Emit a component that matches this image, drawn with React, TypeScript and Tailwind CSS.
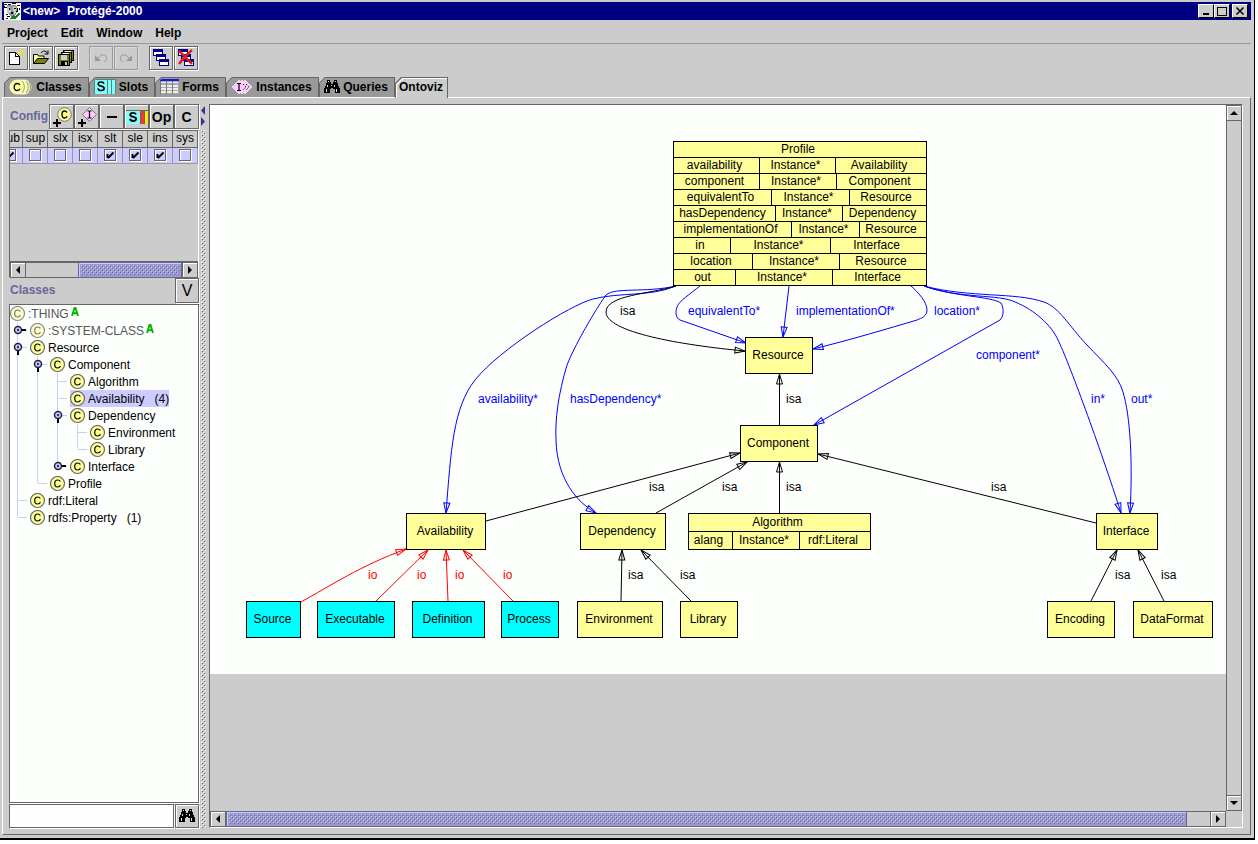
import React from "react";

type IconProps = { className?: string };

/* ---------- shared pieces ---------- */

const raised =
  "flex items-center justify-center border border-[#666] bg-[#ccc] shadow-[inset_1px_1px_0_#fff,1px_1px_0_#fff]";

function Bumps({ id, light, dark }: { id: string; light: string; dark: string }) {
  return (
    <svg className="block h-full w-full" shapeRendering="crispEdges" aria-hidden="true">
      <defs>
        <pattern id={id} width="4" height="4" patternUnits="userSpaceOnUse">
          <rect x="0" y="0" width="1" height="1" fill={light} />
          <rect x="2" y="2" width="1" height="1" fill={light} />
          <rect x="1" y="1" width="1" height="1" fill={dark} />
          <rect x="3" y="3" width="1" height="1" fill={dark} />
        </pattern>
      </defs>
      <rect width="100%" height="100%" fill={`url(#${id})`} />
    </svg>
  );
}

const arrowPaths = {
  left: "M6 0v8L2 4z",
  right: "M2 0v8l4-4z",
  up: "M0 6h8L4 2z",
  down: "M0 2h8L4 6z",
};

function ArrowButton({ dir }: { dir: keyof typeof arrowPaths }) {
  return (
    <button
      aria-label={`Scroll ${dir}`}
      className="flex size-4 shrink-0 items-center justify-center border border-[#666] bg-[#ccc] shadow-[inset_1px_1px_0_#fff]"
    >
      <svg width="8" height="8" aria-hidden="true">
        <path d={arrowPaths[dir]} />
      </svg>
    </button>
  );
}

function Thumb({ id, className }: { id: string; className: string }) {
  return (
    <div className={`h-4 border border-[#666699] bg-[#9999cc] p-0.5 shadow-[inset_1px_1px_0_#ccccff] ${className}`}>
      <Bumps id={id} light="#ccccff" dark="#666699" />
    </div>
  );
}

/* ---------- icons ---------- */

function AppIcon() {
  return (
    <svg width="17" height="17" viewBox="0 0 17 17" shapeRendering="crispEdges" aria-hidden="true">
      <rect width="17" height="17" fill="#fff" />
      <path d="M3 2h9l2 4-2 6-4 2-5-4z" fill="#999" />
      <path d="M3 4h3l1 5-3 2-1-3zM9 4h3v5l-2 2z" fill="#ccc" />
      <path d="M0 1h3v1H0zM4 1h3v1H4zM8 0h4v1H8zM13 2h3v1h-3zM1 4h2v1H1zM5 5h1v2H5zM10 5h2v1h-2zM12 8h2v1h-2zM7 9h2v2H7zM2 11h2v1H2zM3 13h3v1H3zM13 5h1v3h-1zM2 15h2v1H2zM0 3h1v2H0zM15 5h1v2h-1z" />
      <path d="M6 15l3-3 2 2 4-5 1 2-4 5H6z" fill="#157a24" />
    </svg>
  );
}

function NewIcon() {
  return (
    <svg width="18" height="16" viewBox="0 0 18 16" shapeRendering="crispEdges" aria-hidden="true">
      <path d="M2.500 2.500h6l4 4v8h-10z" fill="#fff" stroke="#000" />
      <path d="M8.500 2.500v4h4" fill="none" stroke="#000" />
      <path d="M13 0h1v2h2v1h-2v3h-1V3h-2V2h2zM11 0h1v1h-1zM15 0h1v1h-1zM15 4h1v1h-1zM16 2h2v1h-2z" fill="#ffe600" />
    </svg>
  );
}

function OpenIcon() {
  return (
    <svg width="18" height="16" viewBox="0 0 18 16" aria-hidden="true">
      <path d="M1.500 13.500v-9h4l1 1.500h5.500v3" fill="#ffff99" stroke="#000" />
      <path d="M1.500 13.500l4-5h11l-4 5z" fill="#808000" stroke="#000" />
      <path d="M9 3c1.500-2.500 5-2.500 6.500 0M16 .5v3.500h-3.500" fill="none" stroke="#000" />
    </svg>
  );
}

function SaveAllIcon() {
  return (
    <svg width="16" height="16" viewBox="0 0 16 16" shapeRendering="crispEdges" aria-hidden="true">
      <path d="M5.500.5h10v10h-10z" fill="#808000" stroke="#000" />
      <path d="M7 1h6v1H7z" fill="#fff" />
      <path d="M3.500 2.500h10v10h-10z" fill="#808000" stroke="#000" />
      <path d="M5 3h6v1H5z" fill="#fff" />
      <path d="M.5 4.500h11v11H.5z" fill="#808000" stroke="#000" />
      <path d="M3 5h6v5H3z" fill="#ccc" />
      <path d="M3 11h7v4H3z" />
      <path d="M7 12h2v3H7z" fill="#ccc" />
    </svg>
  );
}

function UndoIcon({ className }: IconProps) {
  return (
    <svg className={className} width="16" height="16" viewBox="0 0 16 16" aria-hidden="true">
      <path d="M5 8l3-3h2.500c4 0 4 5 .5 7" fill="none" stroke="#999" />
      <path d="M2 5v6h6z" fill="#999" />
    </svg>
  );
}

function WindowsIcon({ crossed }: { crossed?: boolean }) {
  const boxes = [
    [0, 0],
    [3, 5],
    [6, 10],
  ];
  return (
    <svg width="18" height="18" viewBox="0 0 18 18" aria-hidden="true">
      {boxes.map(([x, y]) => (
        <g key={x} shapeRendering="crispEdges">
          <rect x={x + 1.5} y={y + 0.5} width="9" height="6" fill="#fff" stroke="#000080" />
          <rect x={x + 1} y={y} width="10" height="3" fill="#000080" />
        </g>
      ))}
      {crossed && <path d="M2 2c5 4 8 8 13 13M15 1C10 5 6 9 2 15" fill="none" stroke="#e81818" strokeWidth="2.400" />}
    </svg>
  );
}

function ClassIcon({ faded }: { faded?: boolean }) {
  return (
    <svg className="shrink-0" width="16" height="16" viewBox="0 0 16 16" aria-hidden="true">
      <circle cx="7.500" cy="7.500" r="7" fill={faded ? "#ffffcc" : "#ffff99"} stroke={faded ? "#888" : "#666"} strokeWidth="1.200" />
      <path d="M10.300 5.500C9.800 4.400 8.800 4 7.700 4 5.900 4 4.700 5.300 4.700 7.500s1.200 3.500 3 3.500c1.300 0 2.300-.6 2.700-1.900" fill="none" stroke={faded ? "#777" : "#000"} strokeWidth="1.200" />
    </svg>
  );
}

function ClassesIcon() {
  return (
    <svg width="24" height="16" viewBox="0 0 24 16" aria-hidden="true">
      {[15, 12, 8].map((cx) => (
        <circle key={cx} cx={cx} cy="8" r="7" fill="#ffff99" stroke="#ffffdd" />
      ))}
      <path d="M13 2c3 3 3 9 0 12M17 2c3 3 3 9 0 12M20 3c2 3 2 7 0 10" fill="none" stroke="#777" strokeWidth=".8" />
      <path d="M10.800 6C10.300 4.900 9.300 4.500 8.200 4.500 6.400 4.500 5.200 5.800 5.200 8s1.200 3.500 3 3.500c1.300 0 2.300-.6 2.700-1.900" fill="none" stroke="#000" strokeWidth="1.300" />
    </svg>
  );
}

function SlotsIcon() {
  return (
    <svg width="22" height="15" viewBox="0 0 22 15" aria-hidden="true">
      <path d="M0 0h22v15H0z" fill="#80ffff" />
      <path d="M.5 15V.5H22M13.500 0v15M17.500 0v15M21.500 0v15" fill="none" stroke="#5a8080" />
      <path d="M10 4.800C9.500 3.500 8.500 3 7 3 5.300 3 4.200 3.800 4.200 5c0 3 6 1.300 6 4.300 0 1.400-1.200 2.200-3 2.200S4.300 10.800 4 9.300" fill="none" stroke="#000" strokeWidth="1.600" />
    </svg>
  );
}

function FormsIcon() {
  return (
    <svg width="19" height="15" viewBox="0 0 19 15" shapeRendering="crispEdges" aria-hidden="true">
      <path d="M0 0h19v15H0z" fill="#aaa" />
      <path d="M0 0h19v2H0z" fill="#1a1ae6" />
      <path d="M0 2h1v13H0zM6 2h1v13H6zM12 2h1v13h-1z" fill="#777" />
      <path d="M1 3h5v1H1zM1 6h5v2H1zM1 9h5v2H1zM1 12h5v2H1zM7 3h5v1H7zM7 6h5v2H7zM7 9h5v2H7zM7 12h5v2H7zM13 3h5v1h-5zM13 6h5v2h-5zM13 9h5v2h-5zM13 12h5v2h-5z" fill="#eee" />
    </svg>
  );
}

function InstancesIcon() {
  return (
    <svg width="22" height="16" viewBox="0 0 22 16" aria-hidden="true">
      {[14, 11, 8].map((x) => (
        <path key={x} d={`M${x} 1l7 7-7 7-7-7z`} fill="#ffccff" stroke="#fff0ff" strokeWidth=".6" />
      ))}
      <path d="M6 4.500h4M6 11.500h4M8 4.500v7" fill="none" stroke="#000" strokeWidth="1.200" />
      <path d="M12 5l3 3-3 3M15 5l3 3-3 3" fill="none" stroke="#222" strokeDasharray="1.500 1" />
    </svg>
  );
}

function BinocularsIcon() {
  return (
    <svg width="16" height="14" viewBox="0 0 16 14" shapeRendering="crispEdges" aria-hidden="true">
      <path d="M3 0h3v2h1v2h2V2h1V0h3v3h1v3h1v2h1v5h-5V9H9V8H7v1H6v4H0V8h1V6h1V3h1z" />
      <path d="M4 1h1v1H4zM11 1h1v1h-1zM3 5h1v2H3zM2 9h1v3H2zM10 5h1v2h-1zM12 9h1v3h-1zM7 5h1v1H7z" fill="#ddd" />
    </svg>
  );
}

function AddClassIcon() {
  return (
    <svg width="22" height="22" viewBox="0 0 22 22" aria-hidden="true">
      <circle cx="13.500" cy="8.500" r="6.800" fill="#ffff99" stroke="#777" />
      <path d="M16 6.500c-.6-1-1.300-1.500-2.400-1.500C12 5 11 6.300 11 8.500s1 3.500 2.600 3.500c1.200 0 2-.6 2.500-1.700" fill="none" stroke="#000" strokeWidth="1.300" />
      <path d="M6 13v8M2 17h8" stroke="#000" strokeWidth="2" />
    </svg>
  );
}

function AddInstanceIcon() {
  return (
    <svg width="22" height="22" viewBox="0 0 22 22" aria-hidden="true">
      <path d="M13.500 1.500l7 7-7 7-7-7z" fill="#ffccff" stroke="#777" />
      <path d="M11.500 5h4M11.500 12h4M13.500 5v7" fill="none" stroke="#000" strokeWidth="1.200" />
      <path d="M6 13v8M2 17h8" stroke="#000" strokeWidth="2" />
    </svg>
  );
}

function SlotColorIcon() {
  return (
    <svg width="22" height="14" viewBox="0 0 22 14" aria-hidden="true">
      <path d="M0 0h14v14H0z" fill="#80ffff" />
      <path d="M14 0h4v14h-4z" fill="#ff3333" />
      <path d="M19 0h3v14h-3z" fill="#ffe600" />
      <path d="M0 .5h22M18.500 0v14M14.500 0v14" stroke="#666" />
      <path d="M10 4.300C9.500 3.200 8.500 2.800 7 2.800c-1.700 0-2.800.8-2.800 2 0 2.700 6 1.300 6 4 0 1.400-1.200 2.200-3 2.200S4.300 10.300 4 8.800" fill="none" stroke="#000" strokeWidth="1.800" />
    </svg>
  );
}

/* ---------- title, menu and tool bars ---------- */

function TitleBar() {
  const box = "flex h-[14px] w-4 items-center justify-center border border-t-white border-l-white border-r-black border-b-black bg-[#ccc]";
  return (
    <header className="flex h-[18px] items-center bg-[#000080] pr-[3px] pl-0.5 font-bold text-white">
      <AppIcon />
      <h1 className="ml-0.5 whitespace-pre text-xs">&lt;new&gt;{"  "}Protégé-2000</h1>
      <div className="ml-auto flex">
        <button className={box} aria-label="Minimize">
          <svg width="10" height="10" aria-hidden="true"><path d="M2 7h6v2H2z" /></svg>
        </button>
        <button className={box} aria-label="Maximize">
          <svg width="10" height="10" shapeRendering="crispEdges" aria-hidden="true">
            <path d="M.5 1.500h9v8h-9z" fill="none" stroke="#000" />
            <path d="M0 1h10v1H0z" />
          </svg>
        </button>
        <button className={`${box} ml-0.5`} aria-label="Close">
          <svg width="10" height="10" aria-hidden="true"><path d="M1.500 1.500l7 7M8.500 1.500l-7 7" stroke="#000" strokeWidth="1.500" /></svg>
        </button>
      </div>
    </header>
  );
}

function ToolBar() {
  const groups: { label: string; icon: React.ReactNode; disabled?: boolean }[][] = [
    [
      { label: "New project", icon: <NewIcon /> },
      { label: "Open project", icon: <OpenIcon /> },
      { label: "Save project", icon: <SaveAllIcon /> },
    ],
    [
      { label: "Undo", icon: <UndoIcon />, disabled: true },
      { label: "Redo", icon: <UndoIcon className="-scale-x-100" />, disabled: true },
    ],
    [
      { label: "Cascade windows", icon: <WindowsIcon /> },
      { label: "Close all windows", icon: <WindowsIcon crossed /> },
    ],
  ];
  return (
    <div className="flex gap-[11px] px-0.5 pt-0.5 pb-[7px]">
      {groups.map((g, i) => (
        <div key={i} className="flex gap-px">
          {g.map((b) => (
            <button
              key={b.label}
              aria-label={b.label}
              disabled={b.disabled}
              className={
                b.disabled
                  ? "flex size-6 items-center justify-center border border-[#999] shadow-[inset_1px_1px_0_#ddd,1px_1px_0_#ddd]"
                  : `${raised} size-6`
              }
            >
              {b.icon}
            </button>
          ))}
        </div>
      ))}
    </div>
  );
}

function TabBar() {
  const tabs = [
    { name: "Classes", icon: <ClassesIcon />, w: "w-[85px]" },
    { name: "Slots", icon: <SlotsIcon />, w: "w-[66px]" },
    { name: "Forms", icon: <FormsIcon />, w: "w-[71px]" },
    { name: "Instances", icon: <InstancesIcon />, w: "w-[93px]" },
    { name: "Queries", icon: <BinocularsIcon />, w: "w-[76px]" },
    { name: "Ontoviz", icon: null, w: "w-[53px]", selected: true },
  ];
  const cut = "[clip-path:polygon(6px_0,100%_0,100%_100%,0_100%,0_6px)]";
  return (
    <div role="tablist" className="flex h-5 pl-0.5">
      {tabs.map((t) => (
        <button
          key={t.name}
          role="tab"
          aria-selected={!!t.selected}
          className={`${cut} ${t.w} relative bg-[#666] pt-px pr-px pl-px font-bold ${t.selected ? "h-[21px]" : "h-5"}`}
        >
          <span className={`${cut} flex h-full bg-white ${t.selected ? "pt-px pl-px" : "pt-0 pl-0"}`}>
            <span className={`${cut} flex flex-1 items-center justify-center gap-[3px] pr-0.5 ${t.selected ? "bg-[#ccc] pb-1" : "bg-[#999] pb-0.5"}`}>
              {t.icon}
              {t.name}
            </span>
          </span>
        </button>
      ))}
    </div>
  );
}

/* ---------- left side ---------- */

const columns = [
  { name: "sub", on: true },
  { name: "sup", on: false },
  { name: "slx", on: false },
  { name: "isx", on: false },
  { name: "slt", on: true },
  { name: "sle", on: true },
  { name: "ins", on: true },
  { name: "sys", on: false },
];

function ConfigPane() {
  const buttons: { label: string; body: React.ReactNode }[] = [
    { label: "Add class", body: <AddClassIcon /> },
    { label: "Add instance", body: <AddInstanceIcon /> },
    { label: "Remove", body: <svg width="10" height="2" aria-hidden="true"><path d="M0 0h10v2H0z" /></svg> },
    { label: "Slot colors", body: <SlotColorIcon /> },
    { label: "Options", body: "Op" },
    { label: "Create", body: "C" },
  ];
  return (
    <section className="flex flex-col">
      <div className="flex h-[26px] items-start">
        <h2 className="w-10 pt-1 pl-px font-bold text-[#666699]">Config</h2>
        <div className="ml-auto flex">
          {buttons.map((b) => (
            <button key={b.label} aria-label={b.label} className={`${raised} h-[25px] w-[25px] overflow-hidden text-sm font-bold`}>
              {b.body}
            </button>
          ))}
        </div>
      </div>
      <div className="h-[148px] border border-r-white border-b-white border-t-[#666] border-l-[#666]">
        <div className="flex h-[130px] items-start justify-end overflow-hidden">
          <table className="w-[200px] shrink-0 table-fixed border-collapse">
            <thead>
              <tr className="h-4">
                {columns.map((c) => (
                  <th key={c.name} className="border-r border-b border-[#666] bg-[#ccc] p-0 text-center leading-[15px] font-normal">
                    {c.name}
                  </th>
                ))}
              </tr>
            </thead>
            <tbody>
              <tr className="h-4">
                {columns.map((c) => (
                  <td key={c.name} className="border-r border-b border-[#999] bg-[#ccccff] p-0">
                    <div className="grid h-[14px] place-content-center">
                      <input
                        type="checkbox"
                        aria-label={c.name}
                        defaultChecked={c.on}
                        className="peer col-start-1 row-start-1 size-3 appearance-none border border-[#666] bg-transparent shadow-[inset_1px_1px_0_#fff,1px_1px_0_#fff]"
                      />
                      <svg className="pointer-events-none col-start-1 row-start-1 hidden peer-checked:block" width="12" height="12" aria-hidden="true">
                        <path d="M3.500 5v4M4 9l5.500-5.500" fill="none" stroke="#000" strokeWidth="1.900" />
                      </svg>
                    </div>
                  </td>
                ))}
              </tr>
            </tbody>
          </table>
        </div>
        <div className="flex border-t border-[#666]">
          <ArrowButton dir="left" />
          <div className="w-[52px] border-y border-[#666]" />
          <Thumb id="bumps-config" className="flex-1" />
          <ArrowButton dir="right" />
        </div>
      </div>
    </section>
  );
}

type Guide = "v" | "t" | "l" | "open" | "closed";
type Row = { name: string; guides: Guide[]; faded?: boolean; count?: number; selected?: boolean };

const rows: Row[] = [
  { name: ":THING", guides: [], faded: true },
  { name: ":SYSTEM-CLASS", guides: ["closed"], faded: true },
  { name: "Resource", guides: ["open"] },
  { name: "Component", guides: ["v", "open"] },
  { name: "Algorithm", guides: ["v", "v", "t"] },
  { name: "Availability", guides: ["v", "v", "t"], count: 4, selected: true },
  { name: "Dependency", guides: ["v", "v", "open"] },
  { name: "Environment", guides: ["v", "v", "v", "t"] },
  { name: "Library", guides: ["v", "v", "v", "l"] },
  { name: "Interface", guides: ["v", "v", "closed"] },
  { name: "Profile", guides: ["v", "l"] },
  { name: "rdf:Literal", guides: ["t"] },
  { name: "rdfs:Property", guides: ["l"], count: 1 },
];

/* Rows 7 and 8 sit under Dependency, whose guide carries on to Interface. */
function GuideCell({ kind, last }: { kind: Guide; last: boolean }) {
  const handle = kind === "open" || kind === "closed";
  const full = kind === "v" || kind === "t" || (handle && !last);
  return (
    <svg className="shrink-0" width="20" height="17" aria-hidden="true">
      <g stroke="#ccccff" fill="none" shapeRendering="crispEdges">
        <path d={full ? "M7.500 0v17" : "M7.500 0v8"} />
        {kind !== "v" && <path d="M8 8.500h9" />}
      </g>
      {kind === "open" && <path d="M8 10v6" stroke="#000" strokeWidth="2" />}
      {kind === "closed" && <path d="M10 8h6" stroke="#000" strokeWidth="2" />}
      {handle && (
        <>
          <circle cx="8" cy="8" r="3.500" fill="#ccccff" stroke="#222244" strokeWidth="1.500" />
          <circle cx="8" cy="8" r="1.200" fill="#333366" />
        </>
      )}
    </svg>
  );
}

function ClassTree() {
  return (
    <ul className="flex-1 border border-[#666] bg-[#fdfffd] shadow-[1px_1px_0_#fff]">
      {rows.map((r) => (
        <li key={r.name} className="flex h-[17px] items-center whitespace-nowrap">
          {r.guides.map((g, i) => (
            <GuideCell key={i} kind={g} last={r.name === "Interface"} />
          ))}
          <span className={`flex h-[17px] items-center gap-0.5 ${r.selected ? "bg-[#ccccff]" : ""} ${r.faded ? "text-[#555]" : ""}`}>
            <ClassIcon faded={r.faded} />
            <span className="whitespace-pre">{r.count ? `${r.name}   (${r.count})` : r.name}</span>
          </span>
          {r.faded && (
            <svg className="mb-1 ml-0.5" width="8" height="9" aria-label="abstract">
              <path d="M1 9l2.500-8h1L7 9M2 6.200h4" fill="none" stroke="#00b400" strokeWidth="1.900" />
            </svg>
          )}
        </li>
      ))}
    </ul>
  );
}

function LeftSide() {
  return (
    <aside className="flex w-[190px] shrink-0 flex-col">
      <ConfigPane />
      <div className="flex h-[26px] items-start">
        <h2 className="pt-1 pl-px font-bold text-[#666699]">Classes</h2>
        <button className={`${raised} ml-auto h-[25px] w-6 text-base`} aria-label="View menu">V</button>
      </div>
      <ClassTree />
      <form className="mt-px flex h-[24px] gap-px" onSubmit={(e) => e.preventDefault()}>
        <input aria-label="Search classes" className="min-w-0 flex-1 border border-[#666] bg-[#fdfffd] px-1 shadow-[1px_1px_0_#fff] outline-none" />
        <button className={`${raised} w-6`} aria-label="Find class">
          <BinocularsIcon />
        </button>
      </form>
    </aside>
  );
}

/* ---------- graph ---------- */

const ORIGIN = { x: 210, y: 105 };

type NodeData = { name: string; x: number; y: number; w: number; instance?: boolean };

const nodes: NodeData[] = [
  { name: "Resource", x: 745, y: 337, w: 68 },
  { name: "Component", x: 740, y: 425, w: 78 },
  { name: "Availability", x: 406, y: 513, w: 80 },
  { name: "Dependency", x: 580, y: 513, w: 86 },
  { name: "Interface", x: 1096, y: 513, w: 62 },
  { name: "Source", x: 246, y: 601, w: 55, instance: true },
  { name: "Executable", x: 317, y: 601, w: 78, instance: true },
  { name: "Definition", x: 412, y: 601, w: 73, instance: true },
  { name: "Process", x: 501, y: 601, w: 58, instance: true },
  { name: "Environment", x: 577, y: 601, w: 86 },
  { name: "Library", x: 680, y: 601, w: 58 },
  { name: "Encoding", x: 1047, y: 601, w: 68 },
  { name: "DataFormat", x: 1133, y: 601, w: 80 },
];

type RecordRow = { cells: [string, string, string]; widths: [number, number] };

const profileRows: RecordRow[] = [
  { cells: ["availability", "Instance*", "Availability"], widths: [86, 76] },
  { cells: ["component", "Instance*", "Component"], widths: [86, 77] },
  { cells: ["equivalentTo", "Instance*", "Resource"], widths: [98, 78] },
  { cells: ["hasDependency", "Instance*", "Dependency"], widths: [102, 67] },
  { cells: ["implementationOf", "Instance*", "Resource"], widths: [118, 68] },
  { cells: ["in", "Instance*", "Interface"], widths: [57, 100] },
  { cells: ["location", "Instance*", "Resource"], widths: [79, 87] },
  { cells: ["out", "Instance*", "Interface"], widths: [62, 97] },
];

const algorithmRows: RecordRow[] = [{ cells: ["alang", "Instance*", "rdf:Literal"], widths: [44, 67] }];

type RecordProps = { name: string; x: number; y: number; w: number; titleHeight: string; rowHeight: string; rows: RecordRow[] };

function RecordNode({ name, x, y, w, titleHeight, rowHeight, rows: records }: RecordProps) {
  const cell = "flex h-full items-center justify-center pr-1 pb-0.5";
  return (
    <div
      className="absolute border border-black bg-[#ffff99]"
      style={{ left: x - ORIGIN.x, top: y - ORIGIN.y, width: w }}
    >
      <div className={`${titleHeight} flex items-center justify-center pr-1 pb-px`}>{name}</div>
      {records.map((r, i) => (
        <div key={i} className={`${rowHeight} flex items-center border-t border-black`}>
          <span className={`${cell} border-r border-black`} style={{ width: r.widths[0] }}>{r.cells[0]}</span>
          <span className={`${cell} border-r border-black`} style={{ width: r.widths[1] }}>{r.cells[1]}</span>
          <span className={`${cell} flex-1`}>{r.cells[2]}</span>
        </div>
      ))}
    </div>
  );
}

const BLUE = "#0000ff";
const BLACK = "#000000";
const RED = "#ff0000";

const edges: { d: string; color: string }[] = [
  { color: BLUE, d: "M676 286C650 297 620 292 593 299C570 305 500 349 475 380C453 408 451 450 446 513" },
  { color: BLUE, d: "M676 286C645 293 615 287 606 295C600 303 577 340 567 365C558 395 555 420 556 440C557 480 578 503 596 513" },
  { color: BLACK, d: "M676 286C650 294 606 295 606 312C606 332 680 345 745 351" },
  { color: BLUE, d: "M700 286C690 294 679 301 677 307C675 313 676 318 680 320L746 343" },
  { color: BLUE, d: "M789 286L783 337" },
  { color: BLUE, d: "M911 286C918 292 927 302 927 310C927 316 922 318 917 320C890 328 850 340 813 349" },
  { color: BLUE, d: "M924 286C955 297 990 296 1001 303C1004 308 1004 316 1000 320L814 425" },
  { color: BLUE, d: "M924 286C960 299 1000 294 1015 302C1035 310 1052 326 1058 340C1068 360 1100 447 1121 513" },
  { color: BLUE, d: "M924 286C970 298 1015 292 1044 302C1060 308 1068 325 1087 345C1105 364 1118 375 1123 392C1130 415 1133 460 1130 513" },
  { color: BLACK, d: "M779.500 425V374" },
  { color: BLACK, d: "M779.500 513V462" },
  { color: BLACK, d: "M486 521L740 453" },
  { color: BLACK, d: "M656 513L747 462" },
  { color: BLACK, d: "M1096 523L818 454" },
  { color: BLACK, d: "M621 601L622 550" },
  { color: BLACK, d: "M691 601L641 550" },
  { color: BLACK, d: "M1091 601L1117 550" },
  { color: BLACK, d: "M1164 601L1138 550" },
  { color: RED, d: "M301 602C330 586 360 566 406 549" },
  { color: RED, d: "M376 601L428 550" },
  { color: RED, d: "M448 601L446 550" },
  { color: RED, d: "M513 601L463 550" },
];

const labels: [string, number, number, string][] = [
  ["isa", 620, 315, BLACK],
  ["equivalentTo*", 688, 315, BLUE],
  ["implementationOf*", 796, 315, BLUE],
  ["location*", 934, 315, BLUE],
  ["component*", 976, 359, BLUE],
  ["availability*", 478, 403, BLUE],
  ["hasDependency*", 570, 403, BLUE],
  ["isa", 786, 403, BLACK],
  ["in*", 1091, 403, BLUE],
  ["out*", 1131, 403, BLUE],
  ["isa", 649, 491, BLACK],
  ["isa", 722, 491, BLACK],
  ["isa", 786, 491, BLACK],
  ["isa", 991, 491, BLACK],
  ["io", 368, 579, RED],
  ["io", 417, 579, RED],
  ["io", 455, 579, RED],
  ["io", 503, 579, RED],
  ["isa", 628, 579, BLACK],
  ["isa", 680, 579, BLACK],
  ["isa", 1115, 579, BLACK],
  ["isa", 1161, 579, BLACK],
];

function Graph() {
  return (
    <div className="relative h-[569px] min-w-[1016px] bg-[#fdfffd]">
      <svg className="block" width="1016" height="569" viewBox="210 105 1016 569" role="img" aria-label="Class graph">
        <defs>
          {[BLUE, BLACK, RED].map((c) => (
            <marker key={c} id={`tip-${c.slice(1)}`} markerUnits="userSpaceOnUse" markerWidth="13" markerHeight="8" refX="11" refY="4" orient="auto">
              <path d="M1 1L11 4L1 7z" fill="none" stroke={c} />
            </marker>
          ))}
        </defs>
        {edges.map((e) => (
          <path key={e.d} d={e.d} fill="none" stroke={e.color} markerEnd={`url(#tip-${e.color.slice(1)})`} />
        ))}
        {labels.map(([text, x, y, color]) => (
          <text key={`${text}-${x}-${y}`} x={x} y={y} fill={color} className="text-xs">
            {text}
          </text>
        ))}
      </svg>
      <RecordNode name="Profile" x={673} y={141} w={254} titleHeight="h-[15px]" rowHeight="h-4" rows={profileRows} />
      <RecordNode name="Algorithm" x={688} y={513} w={183} titleHeight="h-[17px]" rowHeight="h-[18px]" rows={algorithmRows} />
      {nodes.map((n) => (
        <div
          key={n.name}
          className={`absolute flex h-[37px] items-center justify-center border border-black pr-0.5 pb-0.5 ${n.instance ? "bg-[#00ffff]" : "bg-[#ffff99]"}`}
          style={{ left: n.x - ORIGIN.x, top: n.y - ORIGIN.y, width: n.w }}
        >
          {n.name}
        </div>
      ))}
    </div>
  );
}

function GraphPane() {
  return (
    <main className="flex min-w-0 flex-1 flex-col border border-t-[#666] border-l-[#666] border-r-white border-b-white">
      <div className="flex min-h-0 flex-1">
        <div className="min-w-0 flex-1 overflow-hidden">
          <Graph />
        </div>
        <div className="flex w-4 flex-col">
          <ArrowButton dir="up" />
          <div className="flex-1 border-x border-[#666]" />
          <ArrowButton dir="down" />
        </div>
      </div>
      <div className="flex">
        <ArrowButton dir="left" />
        <Thumb id="bumps-graph" className="flex-1" />
        <div className="w-[23px] border-y border-[#666]" />
        <ArrowButton dir="right" />
        <div className="w-4" />
      </div>
    </main>
  );
}

function Splitter() {
  return (
    <div className="flex w-[10px] shrink-0 flex-col pr-1 pl-0.5">
      <svg className="mb-1 shrink-0" width="5" height="22" aria-hidden="true">
        <path d="M4 2v9L0 6.500zM0 13v9l4-4.500z" fill="#333399" />
      </svg>
      <div className="w-[5px] flex-1">
        <Bumps id="bumps-split" light="#ffffff" dark="#666666" />
      </div>
    </div>
  );
}

export default function App() {
  return (
    <div className="flex h-screen min-h-[700px] bg-white pr-[3px] pb-1 font-['Liberation_Sans',Arial,sans-serif] text-xs text-black">
      <div className="flex min-w-0 flex-1 flex-col border-r border-b-2 border-black bg-[#ccc] pt-0.5 pr-[3px] pb-[3px] pl-0.5">
        <TitleBar />
        <nav className="flex h-6 items-center gap-[13px] border-b border-[#999] pt-0.5 pl-[5px] font-bold">
          {["Project", "Edit", "Window", "Help"].map((m) => (
            <button key={m}>{m}</button>
          ))}
        </nav>
        <ToolBar />
        <TabBar />
        <div className="flex min-h-0 flex-1 border border-t-white border-l-white border-r-[#666] border-b-[#666] pt-1.5 pr-[7px] pb-1.5 pl-1.5">
          <LeftSide />
          <Splitter />
          <GraphPane />
        </div>
      </div>
    </div>
  );
}
